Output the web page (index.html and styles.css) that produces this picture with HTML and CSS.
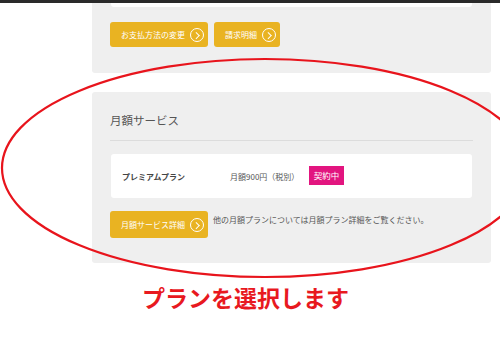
FILE: index.html
```html
<!DOCTYPE html>
<html lang="ja">

<head>
	<meta charset="utf-8">
	<title>月額サービス</title>
	<link rel="stylesheet" href="styles.css">
</head>

<body>
	<div class="topbar"></div>
	<div class="page">
		<section class="panel panel_top">
			<div class="card card_cut"></div>
			<div class="buttons">
				<a class="btn btn_wide">お支払方法の変更<span class="arrow"></span></a>
				<a class="btn btn_small">請求明細<span class="arrow"></span></a>
			</div>
		</section>

		<section class="panel">
			<h2>月額サービス</h2>
			<div class="card plan">
				<span class="plan_name">プレミアムプラン</span>
				<span class="plan_price">月額900円（税別）</span>
				<span class="badge">契約中</span>
			</div>
			<div class="buttons">
				<a class="btn btn_wide btn_tall">月額サービス詳細<span class="arrow"></span></a>
				<span class="note">他の月額プランについては月額プラン詳細をご覧ください。</span>
			</div>
		</section>
	</div>

	<p class="caption">プランを選択します</p>

	<svg class="ring" width="500" height="350" viewBox="0 0 500 350">
		<ellipse cx="265" cy="168" rx="263" ry="109" fill="none" stroke="#e8141c" stroke-width="2.2"/>
	</svg>
</body>

</html>
```

FILE: styles.css
```css
body {
	margin:0;
	font-family:"Noto Sans CJK JP", "Noto Sans", sans-serif;
	color:#555;
	background:#fff;
	position:relative;
	width:500px;
	height:350px;
	overflow:hidden;
}

.topbar {
	height:3px;
	background:#2a2a2a;
}

.page {
	padding-left:92px;
	width:399px;
}

.panel {
	background:#efefef;
	border-radius:3px;
	padding:18px 18px 25px 18px;
	margin-bottom:19px;
}

.panel_top {
	padding-top:0;
	border-radius:0 0 3px 3px;
	padding-bottom:26px;
}

.card {
	background:#fff;
	border-radius:3px;
	margin-left:1px;
	margin-right:1px;
}

.card_cut {
	height:4px;
	border-radius:0 0 3px 3px;
	margin-bottom:15px;
}

h2 {
	margin:0;
	font-size:11.5px;
	font-weight:normal;
	line-height:20px;
	color:#555;
	padding-bottom:10px;
	border-bottom:1px solid #dcdcdc;
}

.plan {
	margin-top:13px;
	height:44px;
	display:flex;
	align-items:center;
	padding-left:11px;
	font-size:8px;
	margin-bottom:13px;
}

.plan_name {
	width:108px;
	flex:none;
	font-weight:bold;
	color:#444;
}

.plan_price {
	width:79px;
	flex:none;
	white-space:nowrap;
	color:#555;
}

.badge {
	background:#e2157f;
	color:#fff;
	font-size:8.5px;
	width:35px;
	height:19px;
	line-height:19px;
	text-align:center;
	margin-top:-1px;
}

.buttons {
	display:flex;
	gap:6px;
	align-items:flex-start;
}

.btn {
	box-sizing:border-box;
	flex:none;
	background:#e9b322;
	color:#fff;
	font-size:8px;
	border-radius:3px;
	height:25px;
	display:flex;
	align-items:center;
	justify-content:space-between;
	padding:0 4px 0 11px;
	white-space:nowrap;
}

.btn_wide {
	width:98px;
}

.btn_small {
	width:66px;
}

.btn_tall {
	height:27px;
}

.arrow {
	box-sizing:border-box;
	width:14px;
	height:14px;
	border:1px solid #fff;
	border-radius:50%;
	position:relative;
	flex:none;
}

.arrow::after {
	content:"";
	position:absolute;
	left:2.5px;
	top:4px;
	width:3.5px;
	height:3.5px;
	border-top:1px solid #fff;
	border-right:1px solid #fff;
	transform:rotate(45deg);
}

.note {
	font-size:8px;
	color:#555;
	margin-top:3px;
	margin-left:-1px;
	white-space:nowrap;
}

.caption {
	margin:19px 0 0 142px;
	font-size:23px;
	font-weight:bold;
	color:#e8191f;
	line-height:30px;
}

.ring {
	position:absolute;
	left:0;
	top:0;
	pointer-events:none;
}
```
